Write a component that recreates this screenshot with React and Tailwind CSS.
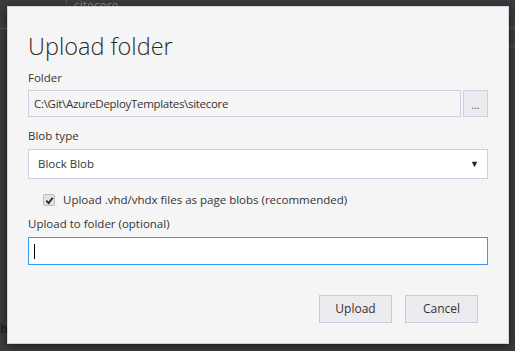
import React from 'react';

const font = { fontFamily: '"Open Sans", "Noto Sans", sans-serif' };

export default function App() {
  return (
    <div className="relative w-[515px] h-[351px] overflow-hidden bg-[#3b3b3b]" style={font}>
      {/* window behind the dialog */}
      <div className="absolute left-[74px] top-0 text-[12px] leading-[12px] text-[#8a8a8a]">sitecore</div>
      <div className="absolute left-[66px] top-0 h-[6px] w-px bg-[#555]" />
      <div className="absolute left-0 top-[28px] h-px w-[7px] bg-[#555]" />
      <div className="absolute left-[508px] top-[28px] h-px w-[7px] bg-[#555]" />
      <div className="absolute left-[508px] top-[46px] h-px w-[7px] bg-[#555]" />
      <div className="absolute left-0 top-[322px] text-[12px] leading-[14px] font-bold text-[#222]">h</div>

      <div className="relative ml-[7px] mt-[6px] w-[502px] h-[338px] border border-[#d4d2e0] bg-[#f5f5f5] pl-[20px] pr-[20px] pt-[19px] shadow-[0_2px_8px_rgba(0,0,0,0.55)]">
        <h1 className="h-[40px] text-[23.5px] font-light leading-[40px] text-[#2b2b2b]">Upload folder</h1>

        <div className="mt-[4px] h-[16px] text-[11.5px] leading-[16px] text-[#333]">Folder</div>
        <div className="mt-[4px] flex h-[27px] gap-[2px]">
          <div className="flex flex-1 items-center border border-[#cfcde0] bg-[#f5f5f5] pl-[5px] text-[11.5px] tracking-[-0.3px] text-[#333]">
            C:\Git\AzureDeployTemplates\sitecore
          </div>
          <button className="flex w-[25px] items-end justify-center border border-[#cfcde0] bg-[#ecebf0] pb-[6px] text-[10px] leading-[10px] text-[#555]">
            ...
          </button>
        </div>

        <div className="mt-[11px] h-[16px] text-[11.5px] leading-[16px] text-[#333]">Blob type</div>
        <div className="mt-[5px] flex h-[30px] items-center justify-between border border-[#cfcde0] bg-white pl-[9px] pr-[8px] text-[11.5px] text-[#333]">
          <span>Block Blob</span>
          <span className="text-[9px] text-[#222]">▼</span>
        </div>

        <div className="mt-[13px] flex h-[16px] items-center pl-[15px] text-[11.5px] text-[#333]">
          <span className="flex h-[12px] w-[12px] items-center justify-center rounded-[2px] border border-[#bdbdbd] bg-[#e2e2e2]">
            <svg width="9" height="9" viewBox="0 0 10 10">
              <path d="M1.5 5.2 L4 7.8 L8.6 2" fill="none" stroke="#222" strokeWidth="2" />
            </svg>
          </span>
          <span className="ml-[8px]">Upload .vhd/vhdx files as page blobs (recommended)</span>
        </div>

        <div className="mt-[8px] h-[16px] text-[11.5px] leading-[16px] text-[#333]">Upload to folder (optional)</div>
        <div className="mt-[5px] flex h-[28px] items-center border border-[#3399ff] bg-white pl-[5px]">
          <span className="h-[15px] w-px bg-black" />
        </div>

        <div className="mt-[30px] flex justify-end gap-[13px] pr-[10px]">
          <button className="h-[28px] w-[73px] border border-[#cbc9d8] bg-[#ecebf0] text-[12px] text-[#333]">Upload</button>
          <button className="h-[28px] w-[73px] border border-[#cbc9d8] bg-[#ecebf0] text-[12px] text-[#333]">Cancel</button>
        </div>
      </div>
    </div>
  );
}
